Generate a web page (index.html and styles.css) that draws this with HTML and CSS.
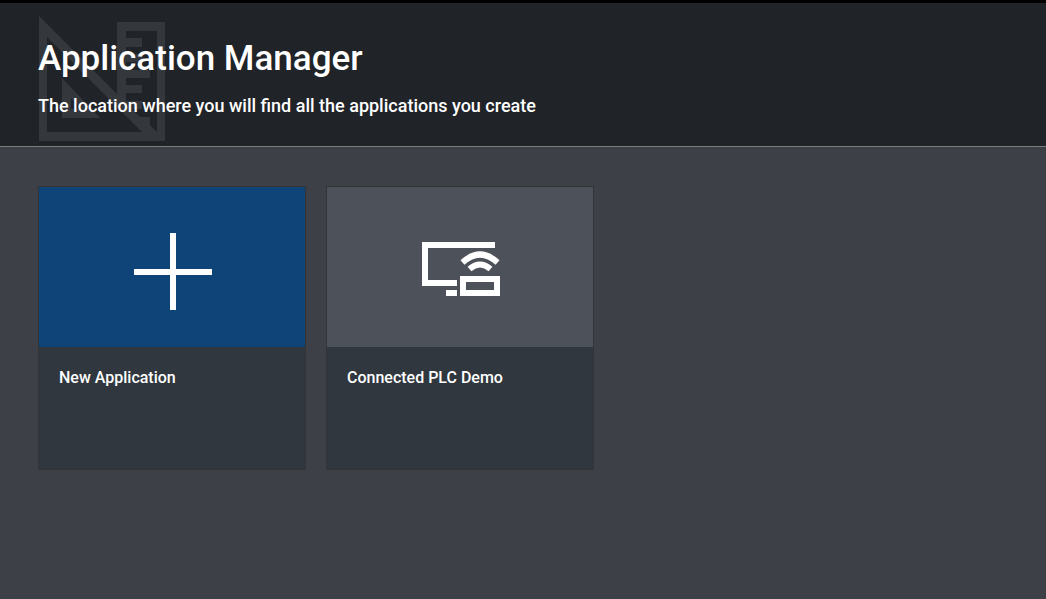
FILE: index.html
```html
<!DOCTYPE html>
<html lang="en">
<head>
  <meta charset="utf-8">
  <meta name="viewport" content="width=device-width, initial-scale=1">
  <title>Application Manager</title>
  <link rel="stylesheet" href="styles.css">
</head>
<body>
  <header class="banner">
    <svg class="banner-art" viewBox="0 0 126 125" aria-hidden="true">
      <path d="M0 0 78 78V6H126V125H0ZM8 21V116H103ZM87 15V22H103V31H87V38H103V46H87V54H111V62H87V69H103V77H87V85H103V93H93L101 101H111V109L118 116V15Z" fill-rule="evenodd"/>
      <path d="M23 62 61 102H23ZM32 82V93H43Z" fill-rule="evenodd"/>
    </svg>
    <h1 class="title">Application Manager</h1>
    <p class="subtitle">The location where you will find all the applications you create</p>
  </header>
  <main class="tiles">
    <button class="tile" type="button">
      <span class="tile-picture tile-picture-new">
        <svg class="icon-plus" viewBox="0 0 78 78" aria-hidden="true">
          <path d="M36 0h6v36h36v6H42v35h-6V42H0v-6h36z"/>
        </svg>
      </span>
      <span class="tile-name">New Application</span>
    </button>
    <button class="tile" type="button">
      <span class="tile-picture">
        <svg class="icon-device" viewBox="0 0 78 54" aria-hidden="true">
          <path d="M0 0H73V6H6V38H35V44H0ZM24 48H35V54H24Z"/>
          <path fill-rule="evenodd" d="M38 34H78V54H38ZM44 40V48H72V40Z"/>
          <path class="wave" d="M40.500 20.500Q58 4.500 75.500 20.500M47.500 27Q58 18 68.500 27"/>
        </svg>
      </span>
      <span class="tile-name">Connected PLC Demo</span>
    </button>
  </main>
</body>
</html>
```
FILE: styles.css
```css
* {
  box-sizing: border-box;
}

body {
  margin: 0;
  min-height: 100vh;
  background: #3e4048;
  color: #fff;
  font-family: Tahoma, Roboto, "DejaVu Sans Condensed", sans-serif;
}

.banner {
  position: relative;
  padding: 32px 38px 28px;
  border-top: 3px solid #000;
  border-bottom: 1px solid #7c7c7c;
  background: #202327;
}

.banner-art {
  position: absolute;
  top: 13px;
  left: 39px;
  width: 126px;
  height: 125px;
  fill: #34373b;
}

.title,
.subtitle {
  position: relative;
  margin: 0;
  font-weight: 500;
}

.title {
  font-size: 35px;
  line-height: 48px;
}

.subtitle {
  margin-top: 11px;
  font-size: 18px;
  line-height: 24px;
}

.tiles {
  display: flex;
  flex-wrap: wrap;
  gap: 20px;
  padding: 39px 38px;
}

.tile {
  display: flex;
  flex-direction: column;
  width: 268px;
  min-height: 284px;
  padding: 0;
  border: 1px solid #333436;
  background: #31373e;
  color: inherit;
  font: inherit;
  text-align: left;
  cursor: pointer;
}

.tile-picture {
  display: flex;
  align-items: center;
  justify-content: center;
  align-self: stretch;
  height: 160px;
  padding-left: 2px;
  background: #4d5159;
}

.tile-picture-new {
  background: #0f4479;
}

.tile-picture svg {
  fill: #fff;
}

.icon-plus {
  width: 78px;
  margin-top: 10px;
}

.icon-device {
  width: 78px;
  margin-top: 4px;
}

.icon-device .wave {
  fill: none;
  stroke: #fff;
  stroke-width: 6px;
}

.tile-name {
  padding: 20px;
  font-size: 16px;
  font-weight: 500;
  line-height: 22px;
}
```
